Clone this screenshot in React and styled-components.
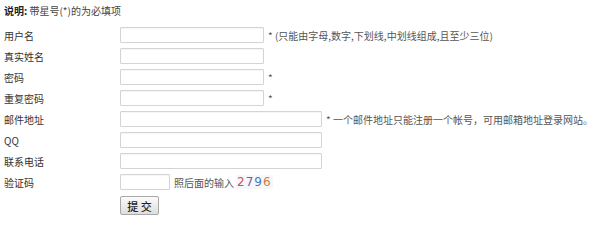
import React from "react";
import styled, { createGlobalStyle } from "styled-components";

const GlobalStyle = createGlobalStyle`
    body {
        margin: 0;
        background: #fff;
        font-family: "Noto Sans CJK SC", "Liberation Sans", sans-serif;
        color: #333;
    }
`;

const Page = styled.div`
    padding: 4px 0 0 4px;
    width: 596px;
    height: 238px;
`;

const Note = styled.div`
    font-size: 10px;
    line-height: 14px;
    height: 14px;
    margin-bottom: 6.5px;
    color: #444;
    b {
        color: #222;
    }
`;

const Row = styled.div`
    display: flex;
    align-items: center;
    height: 21px;
`;

const Label = styled.div`
    width: 116px;
    font-size: 10px;
    color: #333;
`;

const Field = styled.input`
    box-sizing: border-box;
    width: ${props => props.$width}px;
    height: 16px;
    margin: 0;
    padding: 0 3px;
    border: 1px solid #d4d4d4;
    border-radius: 1px;
    background: #fff;
    box-shadow: inset 0 1px 1px rgba(0, 0, 0, 0.04);
    outline: none;
`;

const Hint = styled.span`
    margin-left: 4px;
    font-size: 10px;
    color: #555;
    white-space: nowrap;
`;

const CaptchaText = styled.span`
    margin-left: 4px;
    font-size: 10px;
    color: #555;
`;

const Code = styled.span`
    margin-left: 2px;
    padding: 0 1px;
    background: #f6f7f9;
    font-family: "DejaVu Sans", sans-serif;
    font-size: 12px;
    letter-spacing: 1px;
    line-height: 14px;
`;

const Digit = styled.span`
    color: ${props => props.$color};
`;

const ButtonRow = styled.div`
    display: flex;
    padding: 3.5px 0 0 116px;
`;

const Submit = styled.button`
    box-sizing: border-box;
    width: 39px;
    height: 19px;
    padding: 0;
    border: 1px solid #a8a8a8;
    border-radius: 2px;
    background: linear-gradient(#fbfbfb, #dedede);
    font-family: "Noto Sans CJK SC", sans-serif;
    font-size: 11px;
    font-weight: 500;
    color: #222;
    white-space: pre;
`;

const fields = [
    { label: "用户名", width: 144, hint: "* (只能由字母,数字,下划线,中划线组成,且至少三位)" },
    { label: "真实姓名", width: 144 },
    { label: "密码", width: 144, hint: "*", type: "password" },
    { label: "重复密码", width: 144, hint: "*", type: "password" },
    { label: "邮件地址", width: 202, hint: "* 一个邮件地址只能注册一个帐号，可用邮箱地址登录网站。" },
    { label: "QQ", width: 202 },
    { label: "联系电话", width: 202 }
];

const digits = [
    { d: "2", color: "#c8506e" },
    { d: "7", color: "#8a4fa8" },
    { d: "9", color: "#4a78c8" },
    { d: "6", color: "#d4784a" }
];

function App() {
    return (
        <Page>
            <GlobalStyle />
            <Note><b>说明:</b> 带星号(*)的为必填项</Note>
            {fields.map(field => (
                <Row key={field.label}>
                    <Label>{field.label}</Label>
                    <Field $width={field.width} type={field.type || "text"} />
                    {field.hint && <Hint>{field.hint}</Hint>}
                </Row>
            ))}
            <Row>
                <Label>验证码</Label>
                <Field $width={50} />
                <CaptchaText>照后面的输入</CaptchaText>
                <Code>
                    {digits.map(item => (
                        <Digit key={item.d} $color={item.color}>{item.d}</Digit>
                    ))}
                </Code>
            </Row>
            <ButtonRow>
                <Submit>提 交</Submit>
            </ButtonRow>
        </Page>
    );
};

export default App;
